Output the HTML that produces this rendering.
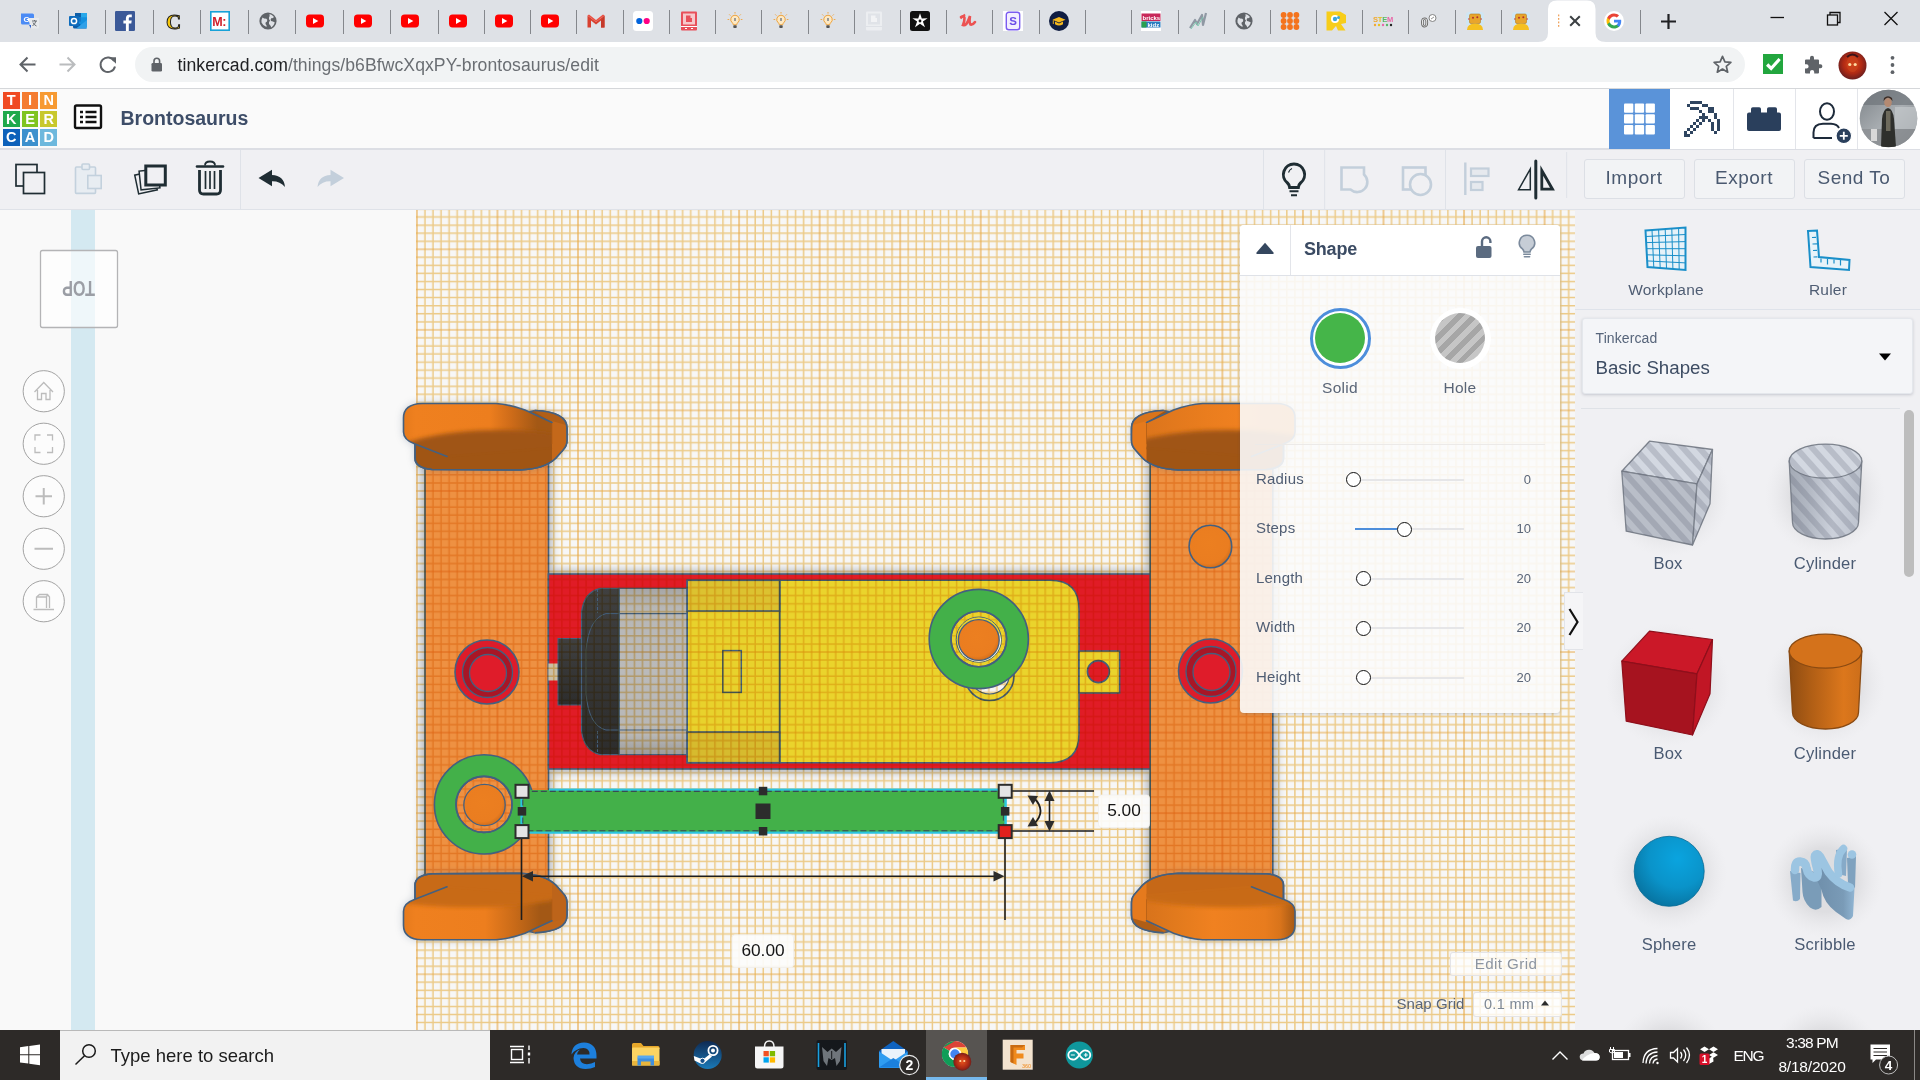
<!DOCTYPE html>
<html>
<head>
<meta charset="utf-8">
<title>Tinkercad</title>
<style>
*{box-sizing:border-box;margin:0;padding:0}
html,body{width:1920px;height:1080px;overflow:hidden;background:#f9f9f9;font-family:"Liberation Sans",sans-serif;}
.abs{position:absolute}
#root{position:absolute;left:0;top:0;width:1920px;height:1080px;overflow:hidden}
/* chrome */
#tabstrip{left:0;top:0;width:1920px;height:42px;background:#dee1e6}
#addrbar{left:0;top:42px;width:1920px;height:46px;background:#fff}
#addrline{left:0;top:88px;width:1920px;height:1px;background:#d5d7da}
#pill{left:135px;top:47px;width:1610px;height:35px;border-radius:18px;background:#f1f3f4}
.sep{position:absolute;top:10px;width:1px;height:24px;background:#84878c}
/* tinkercad header */
#tkhead{left:0;top:89px;width:1920px;height:60px;background:#fafafa}
#tkheadline{left:0;top:148px;width:1920px;height:2px;background:#dcdee4}
#tktool{left:0;top:150px;width:1920px;height:59px;background:#f0f0f3}
#tktoolline{left:0;top:209px;width:1920px;height:1px;background:#dfe2e8}
/* canvas */
#canvas{left:0;top:210px;width:1575px;height:820px;background:#f9f9f9;overflow:hidden}
#sidebar{left:1575px;top:210px;width:345px;height:820px;background:#f0f0f3;overflow:hidden}
#taskbar{left:0;top:1030px;width:1920px;height:50px;background:#2d2a28}
.t{position:absolute;white-space:nowrap;line-height:1}

.sl{left:1256px;font-size:15px;color:#4f5d73;letter-spacing:0.2px}
.sv{left:1481px;width:50px;text-align:right;font-size:13px;color:#5a6577}
.trk{left:1355px;width:109px;height:2px;background:#e6e6e8}
.knob{width:15px;height:15px;border-radius:50%;border:1.6px solid #111;background:#fff}

.sbl{width:100px;text-align:center;font-size:15.5px;color:#4f5d73;letter-spacing:0.2px}
.shl{width:100px;text-align:center;font-size:16.6px;color:#4a5a72;letter-spacing:0.2px}

.lg{position:absolute;width:16.6px;height:16.6px;color:#fff;font-weight:700;font-size:14.5px;line-height:16.6px;text-align:center}
.tb{top:159px;width:101px;height:39.5px;border:1px solid #dcdfe5;border-radius:3px;background:#f2f3f5;font-size:19px;line-height:35px;text-align:center;color:#4a5970;letter-spacing:0.5px}
</style>
</head>
<body>
<div id="root">
<!-- CHROME TAB STRIP -->
<div id="tabstrip" class="abs"></div>
<!-- ADDRESS BAR -->
<div id="addrbar" class="abs"></div>
<div id="pill" class="abs"></div>
<div id="addrline" class="abs"></div>
<!--TABS-->
<div class="sep" style="left:58.00px"></div>
<div class="sep" style="left:105.00px"></div>
<div class="sep" style="left:152.75px"></div>
<div class="sep" style="left:199.75px"></div>
<div class="sep" style="left:248.00px"></div>
<div class="sep" style="left:294.75px"></div>
<div class="sep" style="left:343.00px"></div>
<div class="sep" style="left:389.75px"></div>
<div class="sep" style="left:438.00px"></div>
<div class="sep" style="left:483.75px"></div>
<div class="sep" style="left:529.75px"></div>
<div class="sep" style="left:576.00px"></div>
<div class="sep" style="left:622.75px"></div>
<div class="sep" style="left:669.00px"></div>
<div class="sep" style="left:714.75px"></div>
<div class="sep" style="left:761.00px"></div>
<div class="sep" style="left:807.75px"></div>
<div class="sep" style="left:853.75px"></div>
<div class="sep" style="left:900.00px"></div>
<div class="sep" style="left:945.75px"></div>
<div class="sep" style="left:992.25px"></div>
<div class="sep" style="left:1038.75px"></div>
<div class="sep" style="left:1085.25px"></div>
<div class="sep" style="left:1130.75px"></div>
<div class="sep" style="left:1177.75px"></div>
<div class="sep" style="left:1223.75px"></div>
<div class="sep" style="left:1269.75px"></div>
<div class="sep" style="left:1315.75px"></div>
<div class="sep" style="left:1362.25px"></div>
<div class="sep" style="left:1408.25px"></div>
<div class="sep" style="left:1454.75px"></div>
<div class="sep" style="left:1500.75px"></div>
<div class="sep" style="left:1639.75px"></div>
<svg class="abs" style="left:19.5px;top:11.0px" width="20" height="20" viewBox="0 0 20 20"><path d="M1 2.5h11.5a1.5 1.5 0 0 1 1.5 1.5v9.5H2.5A1.5 1.5 0 0 1 1 12Z" fill="#4b8bf5"/><path d="M8 7h11v9a1.5 1.5 0 0 1-1.5 1.5H11Z" fill="#e8eaed"/><text x="3.4" y="11.3" font-family="Liberation Sans" font-size="8" font-weight="700" fill="#fff">G</text><path d="M12 10h5M14.5 9v1M16 10Q15 13 12.5 15M13 11.5Q14 14 16.5 15" stroke="#5f6368" stroke-width="0.9" fill="none"/><path d="M9 14l2 3.5v-3.5Z" fill="#3367d6"/></svg>
<svg class="abs" style="left:68.0px;top:11.0px" width="20" height="20" viewBox="0 0 20 20"><rect x="7" y="2" width="12" height="13" rx="1" fill="#1490df"/><rect x="7" y="2" width="6" height="4.3" fill="#0f5fa8"/><rect x="13" y="2" width="6" height="4.3" fill="#28a8ea"/><rect x="7" y="6.3" width="6" height="4.3" fill="#1478c8"/><path d="M5 9L19 17.5H6.5A1.5 1.5 0 0 1 5 16Z" fill="#0a5ba8"/><path d="M19 9V16A1.5 1.5 0 0 1 17.5 17.5H8Z" fill="#2fa0e8"/><rect x="1" y="5" width="10" height="10" rx="1" fill="#0f6cbd"/><circle cx="6" cy="10" r="2.6" fill="none" stroke="#fff" stroke-width="1.5"/></svg>
<svg class="abs" style="left:115.0px;top:11.0px" width="20" height="20" viewBox="0 0 20 20"><rect width="20" height="20" rx="1.2" fill="#3b5998"/><path d="M13.8 20v-7.6h2.5l.4-3h-2.9V7.6c0-.9.3-1.4 1.5-1.4h1.5V3.6c-.3 0-1.2-.1-2.2-.1-2.2 0-3.7 1.3-3.7 3.8v2.1H8.4v3h2.5V20Z" fill="#fff"/></svg>
<svg class="abs" style="left:163.0px;top:11.0px" width="20" height="20" viewBox="0 0 20 20"><text x="3" y="17.5" font-family="Liberation Serif" font-size="21" font-weight="700" fill="#f8c80a" stroke="#222" stroke-width="1">C</text></svg>
<svg class="abs" style="left:210.0px;top:11.0px" width="20" height="20" viewBox="0 0 20 20"><rect x="0.8" y="0.8" width="18.4" height="18.4" fill="#fff" stroke="#17a2d8" stroke-width="1.6"/><text x="2.3" y="15" font-family="Liberation Sans" font-size="12.5" font-weight="700" fill="#d0202a" letter-spacing="-0.5">M:</text></svg>
<svg class="abs" style="left:258.0px;top:11.0px" width="20" height="20" viewBox="0 0 20 20"><circle cx="10" cy="10" r="8.6" fill="#5f6368"/><path d="M4.5 6.5Q6 8 8 7.5Q10 8.5 9 10.5Q7 11 7.5 13Q9 14 8.5 16Q5 15 3.5 11.5Q3 9 4.5 6.5ZM11.5 3Q14 3.5 16 6Q15 7.5 13.5 7Q12 8.5 13 10Q15 10 16.8 11.5Q16 14.5 13.5 16.5Q12.5 14 11 13Q10.5 11 12 9.5Q10.5 8.5 11 6.5Q12 5 11.5 3Z" fill="#dee1e6"/></svg>
<svg class="abs" style="left:305.0px;top:11.0px" width="20" height="20" viewBox="0 0 20 20"><rect x="1" y="3.6" width="18" height="12.8" rx="3.6" fill="#f00"/><path d="M8 6.9L13.3 10L8 13.1Z" fill="#fff"/></svg>
<svg class="abs" style="left:353.0px;top:11.0px" width="20" height="20" viewBox="0 0 20 20"><rect x="1" y="3.6" width="18" height="12.8" rx="3.6" fill="#f00"/><path d="M8 6.9L13.3 10L8 13.1Z" fill="#fff"/></svg>
<svg class="abs" style="left:400.0px;top:11.0px" width="20" height="20" viewBox="0 0 20 20"><rect x="1" y="3.6" width="18" height="12.8" rx="3.6" fill="#f00"/><path d="M8 6.9L13.3 10L8 13.1Z" fill="#fff"/></svg>
<svg class="abs" style="left:448.0px;top:11.0px" width="20" height="20" viewBox="0 0 20 20"><rect x="1" y="3.6" width="18" height="12.8" rx="3.6" fill="#f00"/><path d="M8 6.9L13.3 10L8 13.1Z" fill="#fff"/></svg>
<svg class="abs" style="left:494.0px;top:11.0px" width="20" height="20" viewBox="0 0 20 20"><rect x="1" y="3.6" width="18" height="12.8" rx="3.6" fill="#f00"/><path d="M8 6.9L13.3 10L8 13.1Z" fill="#fff"/></svg>
<svg class="abs" style="left:540.0px;top:11.0px" width="20" height="20" viewBox="0 0 20 20"><rect x="1" y="3.6" width="18" height="12.8" rx="3.6" fill="#f00"/><path d="M8 6.9L13.3 10L8 13.1Z" fill="#fff"/></svg>
<svg class="abs" style="left:586.0px;top:11.0px" width="20" height="20" viewBox="0 0 20 20"><path d="M1.5 4.5L10 11L18.5 4.5V16.5H15V9.5L10 13.5L5 9.5V16.5H1.5Z" fill="#d8402f"/><path d="M1.5 4.5L10 11L18.5 4.5L17 3.5L10 9L3 3.5Z" fill="#ea5043"/><path d="M15 9.5V16.5H18.5V4.5Z" fill="#c5392a"/></svg>
<svg class="abs" style="left:633.0px;top:11.0px" width="20" height="20" viewBox="0 0 20 20"><rect width="20" height="20" rx="3.5" fill="#fff"/><circle cx="6.3" cy="10" r="3.1" fill="#0063dc"/><circle cx="13.7" cy="10" r="3.1" fill="#ff0084"/></svg>
<svg class="abs" style="left:679.0px;top:11.0px" width="20" height="20" viewBox="0 0 20 20"><rect x="2" y="0.5" width="16" height="19" rx="1" fill="#e8505b"/><rect x="4" y="2.5" width="12" height="11" fill="#f6c9cc"/><path d="M7 4.5h4.5v2.5h1.5v4H7Z" fill="#e8505b"/><rect x="2" y="15" width="16" height="1" fill="#fff"/><path d="M6 17.5h2M12 17.5h2" stroke="#fff" stroke-width="1"/></svg>
<svg class="abs" style="left:724.5px;top:11.0px" width="20" height="20" viewBox="0 0 20 20"><path d="M10 4.2a4.3 4.3 0 0 0-2.6 7.7c.6.6.8 1.1.9 1.9h3.4c.1-.8.3-1.3.9-1.9A4.3 4.3 0 0 0 10 4.2Z" fill="#fde9c4" stroke="#f0a33a" stroke-width="1"/><rect x="8.3" y="14.3" width="3.4" height="2.8" rx="0.8" fill="#555"/><path d="M10 1v1.6M4.2 3.4l1.2 1.2M15.8 3.4l-1.2 1.2M2.6 8.5h1.6M15.8 8.5h1.6" stroke="#f0a33a" stroke-width="0.9"/><rect x="9" y="7" width="2" height="3" fill="#999"/></svg>
<svg class="abs" style="left:770.8px;top:11.0px" width="20" height="20" viewBox="0 0 20 20"><path d="M10 4.2a4.3 4.3 0 0 0-2.6 7.7c.6.6.8 1.1.9 1.9h3.4c.1-.8.3-1.3.9-1.9A4.3 4.3 0 0 0 10 4.2Z" fill="#fde9c4" stroke="#f0a33a" stroke-width="1"/><rect x="8.3" y="14.3" width="3.4" height="2.8" rx="0.8" fill="#555"/><path d="M10 1v1.6M4.2 3.4l1.2 1.2M15.8 3.4l-1.2 1.2M2.6 8.5h1.6M15.8 8.5h1.6" stroke="#f0a33a" stroke-width="0.9"/><rect x="9" y="7" width="2" height="3" fill="#999"/></svg>
<svg class="abs" style="left:817.5px;top:11.0px" width="20" height="20" viewBox="0 0 20 20"><path d="M10 4.2a4.3 4.3 0 0 0-2.6 7.7c.6.6.8 1.1.9 1.9h3.4c.1-.8.3-1.3.9-1.9A4.3 4.3 0 0 0 10 4.2Z" fill="#fde9c4" stroke="#f0a33a" stroke-width="1"/><rect x="8.3" y="14.3" width="3.4" height="2.8" rx="0.8" fill="#555"/><path d="M10 1v1.6M4.2 3.4l1.2 1.2M15.8 3.4l-1.2 1.2M2.6 8.5h1.6M15.8 8.5h1.6" stroke="#f0a33a" stroke-width="0.9"/><rect x="9" y="7" width="2" height="3" fill="#999"/></svg>
<svg class="abs" style="left:864.0px;top:11.0px" width="20" height="20" viewBox="0 0 20 20"><rect x="2" y="0.5" width="16" height="19" rx="1" fill="#eceef1"/><rect x="4" y="2.5" width="12" height="11" fill="#e0e3e8"/><path d="M7 4.5h4.5v2.5h1.5v4H7Z" fill="#f2f3f5"/><rect x="2" y="15" width="16" height="1" fill="#dee1e6"/></svg>
<svg class="abs" style="left:910.0px;top:11.0px" width="20" height="20" viewBox="0 0 20 20"><rect width="20" height="20" rx="2.5" fill="#111"/><path d="M10 2.2L11.8 7.6L17.6 7.2L12.9 10.6L15 16.2L10 12.8L5 16.2L7.1 10.6L2.4 7.2L8.2 7.6Z" fill="#fff"/><circle cx="10" cy="10" r="1.4" fill="#111"/></svg>
<svg class="abs" style="left:957.5px;top:11.0px" width="20" height="20" viewBox="0 0 20 20"><path d="M3 6Q6 4 6.5 7Q6.5 11 5 14Q8 15 10 10L12 5Q11 12 12.5 13.5Q15 14 17 11" fill="none" stroke="#ec5252" stroke-width="2.6" stroke-linecap="round"/><path d="M2.5 7.5L7 3.5" stroke="#ec5252" stroke-width="2"/></svg>
<svg class="abs" style="left:1003.0px;top:11.0px" width="20" height="20" viewBox="0 0 20 20"><rect width="20" height="20" fill="#fff"/><rect x="3.3" y="1.3" width="13.4" height="17.4" rx="2.5" fill="#f3eefe" stroke="#7b5cf0" stroke-width="1.4"/><text x="6.2" y="14.2" font-family="Liberation Sans" font-size="11.5" font-weight="700" fill="#6a4be8">S</text></svg>
<svg class="abs" style="left:1049.0px;top:11.0px" width="20" height="20" viewBox="0 0 20 20"><circle cx="10" cy="10" r="10" fill="#101d42"/><path d="M3.5 8.8L10 6L16.5 8.8L10 11.6Z" fill="#f5b81c"/><path d="M6 10.6V13.2Q10 15.6 14 13.2V10.6L10 12.4Z" fill="#f5b81c"/><path d="M4.3 9.2V13" stroke="#f5b81c" stroke-width="0.9"/></svg>
<svg class="abs" style="left:1140.5px;top:11.0px" width="20" height="20" viewBox="0 0 20 20"><rect width="20" height="20" fill="#fff"/><rect x="0.5" y="2.5" width="19" height="7.5" fill="#c8285a"/><rect x="0.5" y="10.5" width="19" height="6" fill="#2a7cc0"/><rect x="0.5" y="10.5" width="5" height="6" fill="#2aa050"/><text x="1.5" y="8.8" font-family="Liberation Sans" font-size="6" font-weight="700" fill="#fff">bricks</text><text x="6.5" y="15.8" font-family="Liberation Sans" font-size="6" font-weight="700" fill="#fff">kidz</text></svg>
<svg class="abs" style="left:1188.0px;top:11.0px" width="20" height="20" viewBox="0 0 20 20"><path d="M2 17L7 9L9 13L14 4L15 14L18 2" fill="none" stroke="#8f98a3" stroke-width="2.2" stroke-linejoin="round"/><path d="M3 18L8 11L10 15L15 6" fill="none" stroke="#7fc9b0" stroke-width="1"/></svg>
<svg class="abs" style="left:1234.0px;top:11.0px" width="20" height="20" viewBox="0 0 20 20"><circle cx="10" cy="10" r="8.6" fill="#5f6368"/><path d="M4.5 6.5Q6 8 8 7.5Q10 8.5 9 10.5Q7 11 7.5 13Q9 14 8.5 16Q5 15 3.5 11.5Q3 9 4.5 6.5ZM11.5 3Q14 3.5 16 6Q15 7.5 13.5 7Q12 8.5 13 10Q15 10 16.8 11.5Q16 14.5 13.5 16.5Q12.5 14 11 13Q10.5 11 12 9.5Q10.5 8.5 11 6.5Q12 5 11.5 3Z" fill="#dee1e6"/></svg>
<svg class="abs" style="left:1280.0px;top:11.0px" width="20" height="20" viewBox="0 0 20 20"><g fill="#f4731c"><circle cx="3.6" cy="4" r="2.9"/><circle cx="10" cy="4" r="2.9"/><circle cx="16.4" cy="4" r="2.9"/><circle cx="3.6" cy="10" r="2.9"/><circle cx="10" cy="10" r="2.9"/><circle cx="16.4" cy="10" r="2.9"/><circle cx="3.6" cy="16" r="2.9"/><circle cx="10" cy="16" r="2.9"/><circle cx="16.4" cy="16" r="2.9"/></g></svg>
<svg class="abs" style="left:1326.0px;top:11.0px" width="20" height="20" viewBox="0 0 20 20"><path d="M0.5 0.5H14L20 4V12L15 13L19.5 19.5H12L10 15L6 19.5H0.5Z" fill="#f7cd1a"/><circle cx="9" cy="8" r="4" fill="#fff"/><circle cx="9" cy="8" r="2.2" fill="#3aa6dc"/><circle cx="12.5" cy="6.5" r="1.5" fill="#3aa6dc"/></svg>
<svg class="abs" style="left:1372.5px;top:11.0px" width="20" height="20" viewBox="0 0 20 20"><text x="0" y="10.5" font-family="Liberation Sans" font-size="7.5" font-weight="700" letter-spacing="-0.2"><tspan fill="#f0a830">S</tspan><tspan fill="#e8c020">T</tspan><tspan fill="#58b868">E</tspan><tspan fill="#e868a8">M</tspan><tspan fill="#48a8d8">A</tspan></text><g><circle cx="2" cy="14" r="1.2" fill="#f0a830"/><circle cx="6" cy="14" r="1.2" fill="#e8c020"/><circle cx="10" cy="14" r="1.2" fill="#e868a8"/><circle cx="14" cy="14" r="1.2" fill="#58b868"/><circle cx="18" cy="14" r="1.2" fill="#222"/></g></svg>
<svg class="abs" style="left:1419.0px;top:11.0px" width="20" height="20" viewBox="0 0 20 20"><text x="2" y="15.5" font-family="Liberation Sans" font-size="13" font-weight="700" fill="#fff" stroke="#666" stroke-width="0.9">0</text><circle cx="13.5" cy="7" r="3.5" fill="#fff" stroke="#777" stroke-width="0.9"/><path d="M12 8l3-2" stroke="#777" stroke-width="0.8"/></svg>
<svg class="abs" style="left:1465.0px;top:11.0px" width="20" height="20" viewBox="0 0 20 20"><rect x="1" y="1" width="18" height="14" rx="3" fill="#cfe6f4"/><rect x="4.5" y="3" width="11" height="9.5" rx="1.5" fill="#e8a52c" stroke="#b47a1e" stroke-width="0.6"/><circle cx="8" cy="6.8" r="1" fill="#b03030"/><circle cx="12.3" cy="6.3" r="1" fill="#b03030"/><path d="M3 8h1.5M15.5 8h1.5" stroke="#c33" stroke-width="1.2"/><path d="M2 19Q2 12.5 10 12.5Q18 12.5 18 19Z" fill="#f5c020"/></svg>
<svg class="abs" style="left:1511.0px;top:11.0px" width="20" height="20" viewBox="0 0 20 20"><rect x="1" y="1" width="18" height="14" rx="3" fill="#cfe6f4"/><rect x="4.5" y="3" width="11" height="9.5" rx="1.5" fill="#e8a52c" stroke="#b47a1e" stroke-width="0.6"/><circle cx="8" cy="6.8" r="1" fill="#b03030"/><circle cx="12.3" cy="6.3" r="1" fill="#b03030"/><path d="M3 8h1.5M15.5 8h1.5" stroke="#c33" stroke-width="1.2"/><path d="M2 19Q2 12.5 10 12.5Q18 12.5 18 19Z" fill="#f5c020"/></svg>
<svg class="abs" style="left:1604.0px;top:11.0px" width="20" height="20" viewBox="0 0 20 20"><circle cx="10" cy="10" r="10" fill="#fff"/><path d="M17.2 10.2c0-.6 0-1-.1-1.5H10v2.8h4.1c-.2 1-.8 1.8-1.6 2.4v2h2.5c1.4-1.3 2.2-3.3 2.2-5.7Z" fill="#4285f4"/><path d="M10 17.5c2 0 3.7-.7 5-1.8l-2.5-2c-.7.5-1.5.7-2.5.7-1.9 0-3.6-1.3-4.2-3.1H3.2v2C4.4 15.8 7 17.5 10 17.5Z" fill="#34a853"/><path d="M5.8 11.3c-.1-.4-.2-.9-.2-1.3s.1-.9.2-1.3v-2H3.2C2.7 7.7 2.5 8.8 2.5 10s.3 2.3.7 3.3Z" fill="#fbbc05"/><path d="M10 5.5c1.1 0 2.1.4 2.8 1.1l2.2-2.2C13.7 3.2 12 2.5 10 2.5 7 2.5 4.4 4.2 3.2 6.7l2.6 2C6.4 6.8 8.1 5.5 10 5.5Z" fill="#ea4335"/></svg>
<svg class="abs" style="left:1538px;top:0" width="68" height="42" viewBox="0 0 68 42"><path d="M0 42Q10 42 10 33V9Q10 0.5 19 0.5H49Q57.5 0.5 57.5 9V33Q57.5 42 68 42Z" fill="#fff"/><g fill="#f0a35e"><rect x="20" y="14.5" width="1.3" height="1.8"/><rect x="20" y="18" width="1.3" height="1.8"/><rect x="20" y="21.5" width="1.3" height="1.8"/><rect x="20" y="25" width="1.3" height="1.8"/></g><path d="M32.2 16.2L41.8 25.8M41.8 16.2L32.2 25.8" stroke="#3c4043" stroke-width="2"/></svg>
<svg class="abs" style="left:1660px;top:13px" width="17" height="17" viewBox="0 0 17 17"><path d="M8.5 1V16M1 8.5H16" stroke="#202124" stroke-width="2.2"/></svg>
<svg class="abs" style="left:1760px;top:5px" width="150" height="28" viewBox="1760 5 150 28"><path d="M1770.5 17.5H1784" stroke="#111" stroke-width="1.3"/><rect x="1827.5" y="15" width="10" height="10" fill="none" stroke="#111" stroke-width="1.3"/><path d="M1830 15V12.5H1840V22.5H1837.5" fill="none" stroke="#111" stroke-width="1.3"/><path d="M1884.5 12L1897.5 25M1897.5 12L1884.5 25" stroke="#111" stroke-width="1.3"/></svg>
<svg class="abs" style="left:0;top:42px" width="135" height="46" viewBox="0 42 135 46"><g fill="none" stroke="#5f6368" stroke-width="2" ><path d="M35.5 64.5H20.5M27.5 57.5L20.5 64.5L27.5 71.5"/></g><g fill="none" stroke="#babcbe" stroke-width="2"><path d="M59.5 64.5H74.5M67.5 57.5L74.5 64.5L67.5 71.5"/></g><g fill="none" stroke="#5f6368" stroke-width="2"><path d="M114.2 61A7.3 7.3 0 1 0 115 66.5"/></g><path d="M109.5 57.2H116V63.7Z" fill="#5f6368" transform="rotate(0)"/></svg>
<svg class="abs" style="left:150px;top:56px" width="14" height="18" viewBox="0 0 14 18"><rect x="1.5" y="7" width="10.5" height="8.5" rx="1.3" fill="#5f6368"/><path d="M4 7.5V5a2.8 2.8 0 0 1 5.6 0V7.5" fill="none" stroke="#5f6368" stroke-width="1.6"/></svg>
<div class="t" style="left:177.5px;top:56.5px;font-size:17.6px;letter-spacing:0.07px;color:#202124">tinkercad.com<span style="color:#6a6e73">/things/b6BfwcXqxPY-brontosaurus/edit</span></div>
<svg class="abs" style="left:1712px;top:54px" width="21" height="21" viewBox="0 0 21 21"><path d="M10.5 2.3L12.9 7.9L18.9 8.4L14.3 12.3L15.7 18.2L10.5 15L5.3 18.2L6.7 12.3L2.1 8.4L8.1 7.9Z" fill="none" stroke="#5f6368" stroke-width="1.7" stroke-linejoin="round"/></svg>
<div class="abs" style="left:1762.5px;top:54.3px;width:20.3px;height:20px;background:#22a63e"></div><svg class="abs" style="left:1762.5px;top:54.3px" width="20.3" height="20" viewBox="0 0 20 20"><path d="M4 10.5L8 14.5L16.5 5" fill="none" stroke="#fff" stroke-width="3.2"/></svg>
<svg class="abs" style="left:1802px;top:55px" width="21" height="21" viewBox="0 0 21 21"><path d="M8 2.8a2 2 0 0 1 4 0V4.5H16a1 1 0 0 1 1 1V9.2h1.4a2 2 0 0 1 0 4H17V17.5a1 1 0 0 1-1 1H12.2V17a2.1 2.1 0 0 0-4.2 0v1.5H4a1 1 0 0 1-1-1V13.5H4.5a2.1 2.1 0 0 0 0-4.2H3V5.5a1 1 0 0 1 1-1H8Z" fill="#5f6368"/></svg>
<svg class="abs" style="left:1838px;top:50.5px" width="29" height="29" viewBox="0 0 29 29"><defs><radialGradient id="cav" cx="0.5" cy="0.45" r="0.6"><stop offset="0" stop-color="#e04a18"/><stop offset="0.55" stop-color="#b02a14"/><stop offset="1" stop-color="#5a1c22"/></radialGradient></defs><circle cx="14.5" cy="14.5" r="14" fill="url(#cav)"/><ellipse cx="14.5" cy="13" rx="6" ry="8" fill="#c8401a" opacity="0.8"/><circle cx="11.8" cy="13.5" r="1.6" fill="#ffd9a0"/><circle cx="17.2" cy="13.5" r="1.6" fill="#ffd9a0"/><path d="M9 6Q14.5 1 20 6" stroke="#3a1418" stroke-width="2" fill="none"/></svg>
<svg class="abs" style="left:1889px;top:54px" width="7" height="22" viewBox="0 0 7 22"><g fill="#5f6368"><circle cx="3.5" cy="3.8" r="1.9"/><circle cx="3.5" cy="11" r="1.9"/><circle cx="3.5" cy="18.2" r="1.9"/></g></svg>
<!--/TABS-->
<!-- TINKERCAD HEADER -->
<div id="tkhead" class="abs"></div>
<div id="tkheadline" class="abs"></div>
<div id="tktool" class="abs"></div>
<div id="tktoolline" class="abs"></div>
<!--HEADER-->
<!-- logo -->
<div id="logo">
<div class="lg" style="left:3px;top:92px;background:#f04a22">T</div><div class="lg" style="left:21.7px;top:92px;background:#f47b30">I</div><div class="lg" style="left:40.4px;top:92px;background:#f79a32">N</div>
<div class="lg" style="left:3px;top:110.7px;background:#1fa94b">K</div><div class="lg" style="left:21.7px;top:110.7px;background:#7fc41f">E</div><div class="lg" style="left:40.4px;top:110.7px;background:#c8c82c">R</div>
<div class="lg" style="left:3px;top:129.4px;background:#0d61ba">C</div><div class="lg" style="left:21.7px;top:129.4px;background:#3d90cd">A</div><div class="lg" style="left:40.4px;top:129.4px;background:#6db8dd">D</div>
</div>
<!-- list icon -->
<svg class="abs" style="left:72px;top:102px" width="32" height="30" viewBox="0 0 32 30"><rect x="3" y="3.5" width="26" height="22.5" rx="1.5" fill="#fff" stroke="#111" stroke-width="2.4"/><path d="M8 10h3M8 15h3M8 20h3" stroke="#111" stroke-width="2.6"/><path d="M13.5 10h11M13.5 15h11M13.5 20h11" stroke="#111" stroke-width="2.6"/></svg>
<div class="t" style="left:120.5px;top:109px;font-size:19.5px;font-weight:700;color:#3d4d68;letter-spacing:0px">Brontosaurus</div>
<!-- right header icons -->
<div class="abs" style="left:1609px;top:89px;width:61px;height:60px;background:#5a93d9"></div>
<svg class="abs" style="left:1624px;top:103px" width="32" height="32" viewBox="0 0 32 32"><g fill="#fff"><rect x="0" y="0.5" width="9.3" height="9.3" rx="1"/><rect x="10.8" y="0.5" width="9.3" height="9.3" rx="1"/><rect x="21.6" y="0.5" width="9.3" height="9.3" rx="1"/><rect x="0" y="11.3" width="9.3" height="9.3" rx="1"/><rect x="10.8" y="11.3" width="9.3" height="9.3" rx="1"/><rect x="21.6" y="11.3" width="9.3" height="9.3" rx="1"/><rect x="0" y="22.1" width="9.3" height="9.3" rx="1"/><rect x="10.8" y="22.1" width="9.3" height="9.3" rx="1"/><rect x="21.6" y="22.1" width="9.3" height="9.3" rx="1"/></g></svg>
<div class="abs" style="left:1670px;top:89px;width:63.5px;height:60px;background:#fff;border-right:1px solid #e3e5ea"></div>
<div class="abs" style="left:1733.5px;top:89px;width:62px;height:60px;background:#fff;border-right:1px solid #e3e5ea"></div>
<div class="abs" style="left:1795.5px;top:89px;width:62.5px;height:60px;background:#fff;border-right:1px solid #e3e5ea"></div>
<div class="abs" style="left:1858px;top:89px;width:62px;height:60px;background:#fff"></div>
<!-- pickaxe -->
<svg class="abs" style="left:1683.7px;top:100.7px" width="37" height="37" viewBox="0 0 37 37" shape-rendering="crispEdges"><g fill="#2f4560"><rect x="6.08" y="0.00" width="3.04" height="3.04"/><rect x="9.12" y="0.00" width="3.04" height="3.04"/><rect x="12.16" y="0.00" width="3.04" height="3.04"/><rect x="15.20" y="0.00" width="3.04" height="3.04"/><rect x="3.04" y="3.04" width="3.04" height="3.04"/><rect x="18.24" y="3.04" width="3.04" height="3.04"/><rect x="21.28" y="3.04" width="3.04" height="3.04"/><rect x="6.08" y="6.08" width="3.04" height="3.04"/><rect x="9.12" y="6.08" width="3.04" height="3.04"/><rect x="12.16" y="6.08" width="3.04" height="3.04"/><rect x="24.32" y="6.08" width="3.04" height="3.04"/><rect x="27.36" y="6.08" width="3.04" height="3.04"/><rect x="15.20" y="9.12" width="3.04" height="3.04"/><rect x="24.32" y="9.12" width="3.04" height="3.04"/><rect x="27.36" y="9.12" width="3.04" height="3.04"/><rect x="18.24" y="12.16" width="3.04" height="3.04"/><rect x="30.40" y="12.16" width="3.04" height="3.04"/><rect x="15.20" y="15.20" width="3.04" height="3.04"/><rect x="18.24" y="15.20" width="3.04" height="3.04"/><rect x="21.28" y="15.20" width="3.04" height="3.04"/><rect x="30.40" y="15.20" width="3.04" height="3.04"/><rect x="12.16" y="18.24" width="3.04" height="3.04"/><rect x="18.24" y="18.24" width="3.04" height="3.04"/><rect x="24.32" y="18.24" width="3.04" height="3.04"/><rect x="33.44" y="18.24" width="3.04" height="3.04"/><rect x="9.12" y="21.28" width="3.04" height="3.04"/><rect x="15.20" y="21.28" width="3.04" height="3.04"/><rect x="27.36" y="21.28" width="3.04" height="3.04"/><rect x="33.44" y="21.28" width="3.04" height="3.04"/><rect x="6.08" y="24.32" width="3.04" height="3.04"/><rect x="12.16" y="24.32" width="3.04" height="3.04"/><rect x="27.36" y="24.32" width="3.04" height="3.04"/><rect x="33.44" y="24.32" width="3.04" height="3.04"/><rect x="3.04" y="27.36" width="3.04" height="3.04"/><rect x="9.12" y="27.36" width="3.04" height="3.04"/><rect x="27.36" y="27.36" width="3.04" height="3.04"/><rect x="33.44" y="27.36" width="3.04" height="3.04"/><rect x="0.00" y="30.40" width="3.04" height="3.04"/><rect x="6.08" y="30.40" width="3.04" height="3.04"/><rect x="30.40" y="30.40" width="3.04" height="3.04"/><rect x="0.00" y="33.44" width="3.04" height="3.04"/><rect x="3.04" y="33.44" width="3.04" height="3.04"/></g></svg>
<!-- brick -->
<svg class="abs" style="left:1745px;top:104px" width="38" height="30" viewBox="0 0 38 30"><path d="M2 10.5a2 2 0 0 1 2-2h2V5a1.8 1.8 0 0 1 1.8-1.8h6.4A1.8 1.8 0 0 1 16 5v3.5h6V5a1.8 1.8 0 0 1 1.8-1.8h6.4A1.8 1.8 0 0 1 32 5v3.5h2a2 2 0 0 1 2 2V25a2 2 0 0 1-2 2H4a2 2 0 0 1-2-2Z" fill="#2a3f5c"/></svg>
<!-- person plus -->
<svg class="abs" style="left:1809px;top:99px" width="44" height="46" viewBox="0 0 44 46"><g fill="none" stroke="#1d2a3a" stroke-width="2"><ellipse cx="18" cy="12.5" rx="7" ry="8.3"/><path d="M4.5 39V33.5Q4.5 25 14 24.8H22Q28 25 30 29"/><path d="M4.5 39H23"/></g><circle cx="34.8" cy="36.8" r="7.8" fill="#2a3f5c" stroke="#fff" stroke-width="1.2"/><path d="M30.8 36.8h8M34.8 32.8v8" stroke="#fff" stroke-width="1.8"/></svg>
<!-- avatar -->
<svg class="abs" style="left:1859px;top:89px" width="60" height="60" viewBox="0 0 60 60"><defs><clipPath id="av"><circle cx="29.5" cy="29.5" r="28.8"/></clipPath><linearGradient id="avg" x1="0" x2="1" y1="0" y2="1"><stop offset="0" stop-color="#7d8388"/><stop offset="0.5" stop-color="#a9aeb2"/><stop offset="1" stop-color="#6c7176"/></linearGradient></defs><g clip-path="url(#av)"><rect width="60" height="60" fill="url(#avg)"/><rect x="0" y="0" width="60" height="16" fill="#6f757a" opacity="0.7"/><rect x="36" y="18" width="24" height="22" fill="#c5c9cc" opacity="0.7"/><rect x="0" y="40" width="60" height="20" fill="#8b8f92" opacity="0.8"/><path d="M22 58L23 30Q24 20 29 19Q34 20 35 30L37 58Z" fill="#2e2f2c"/><ellipse cx="29" cy="13.5" rx="3.8" ry="4.6" fill="#b48a72"/><path d="M24.5 12Q29 5 33.5 12L33 9Q29 5.5 25 9Z" fill="#3a2a22"/><rect x="27" y="22" width="4.5" height="20" fill="#6d6a5c"/><rect x="12" y="40" width="6" height="12" fill="#d8d8d8"/></g></svg>
<!-- toolbar left icons -->
<svg class="abs" style="left:0;top:150px" width="360" height="59" viewBox="0 150 360 59">
<g fill="#f0f0f3" stroke="#1f2d33" stroke-width="1.7"><rect x="16" y="164.5" width="21" height="21.5"/><rect x="23.5" y="172.5" width="21" height="21"/></g>
<g fill="#e8edf2" stroke="#c3d1dd" stroke-width="1.6"><rect x="75.5" y="167" width="20" height="26.4" rx="1"/><rect x="82" y="164" width="7.5" height="5.5" rx="1"/><rect x="87.8" y="175.5" width="13.4" height="13"/></g>
<g fill="#f0f0f3" stroke="#1f2d33"><rect x="136.5" y="173" width="19" height="19" stroke-width="1.5" transform="rotate(-12 146 182.5)"/><rect x="140" y="170" width="19" height="19" stroke-width="1.5" transform="rotate(-6 149.5 179.5)"/><rect x="145.8" y="166" width="19.5" height="19" stroke-width="3"/></g>
<g fill="none" stroke="#1f2d33"><path d="M197 166.5H223" stroke-width="2.6" stroke-linecap="round"/><path d="M205 165.5Q205 161.5 210 161.5Q215 161.5 215 165.5" stroke-width="1.8"/><path d="M199.5 170V190Q199.5 194 203.5 194H216.5Q220.5 194 220.5 190V170" stroke-width="2.8"/><path d="M205.5 171V189M210 171V189M214.5 171V189" stroke-width="1.7"/></g>
<path d="M240.5 150V209" stroke="#dfe2e8" stroke-width="1"/>
<path d="M258.5 178L272 169.8V175Q284 175.5 285 187Q280 181 272 181.2V186.2Z" fill="#1f2d33"/>
<path d="M344 178L330.5 169.8V175Q318.5 175.5 317.5 187Q322.5 181 330.5 181.2V186.2Z" fill="#c3cfdb"/>
</svg>
<!-- toolbar right icons -->
<svg class="abs" style="left:1260px;top:150px" width="320" height="59" viewBox="1260 150 320 59">
<path d="M1263.5 150V209M1324.7 150V209M1445.5 150V209M1566.7 152V198" stroke="#dfe2e8" stroke-width="1"/>
<g fill="none" stroke="#1f2d33"><path d="M1294 164a10.6 10.6 0 0 0-6.5 19c1.6 1.4 2 2.6 2.2 4.6h8.6c.2-2 .6-3.2 2.2-4.6a10.6 10.6 0 0 0-6.5-19Z" stroke-width="3"/><path d="M1289.5 191.2h9M1291 195.2h6" stroke-width="2"/><path d="M1288.5 172.5Q1289.5 169.5 1292 168.5" stroke-width="1.2"/></g>
<g fill="none" stroke="#c3cfdb" stroke-width="2.6"><path d="M1341.5 167.5H1364V174.5A10 10 0 1 1 1350.5 189.5H1341.5Z"/><rect x="1403" y="167.5" width="22.5" height="22"/><circle cx="1420.5" cy="184.5" r="10.5" fill="#f0f0f3"/></g>
<g fill="#e6e9ee" stroke="#c3cfdb" stroke-width="2.2"><path d="M1465.3 162.5V195" stroke-width="2.4"/><rect x="1471" y="168.5" width="17.5" height="7.5"/><rect x="1471" y="182" width="11.5" height="8"/></g>
<g fill="none" stroke="#1f2d33"><path d="M1535.8 161V198" stroke-width="3" stroke-linecap="round"/><path d="M1518.5 189.8L1530.3 169V189.8Z" stroke-width="1.5"/><path d="M1541.8 170.5L1552.5 189.2H1541.8Z" stroke-width="2.8"/></g>
</svg>
<div class="abs tb" style="left:1583.5px">Import</div>
<div class="abs tb" style="left:1693.5px">Export</div>
<div class="abs tb" style="left:1803.5px">Send To</div>
<!--/HEADER-->
<!-- CANVAS -->
<div id="canvas" class="abs">
<!--SCENE-->
<svg class="abs" style="left:0;top:0" width="1575" height="820" viewBox="0 210 1575 820">
<defs>
  <pattern id="grid" patternUnits="userSpaceOnUse" x="416.9" y="168.75" width="80.55" height="80.55">
    <g stroke="#f4d18c" stroke-width="1.5">
      <path d="M8.055 0V80.55M16.11 0V80.55M24.165 0V80.55M32.22 0V80.55M40.275 0V80.55M48.33 0V80.55M56.385 0V80.55M64.44 0V80.55M72.495 0V80.55"/>
      <path d="M0 8.055H80.55M0 16.11H80.55M0 24.165H80.55M0 32.22H80.55M0 40.275H80.55M0 48.33H80.55M0 56.385H80.55M0 64.44H80.55M0 72.495H80.55"/>
    </g>
    <g stroke="#f0b04c" stroke-width="1.15">
      <path d="M0 0V80.55M80.55 0V80.55M0 0H80.55M0 80.55H80.55"/>
    </g>
  </pattern>
  <linearGradient id="gA" x1="0" x2="1" y1="0" y2="0">
    <stop offset="0" stop-color="#e67a1c"/><stop offset="0.08" stop-color="#ef801f"/><stop offset="0.58" stop-color="#ed7e1e"/><stop offset="0.72" stop-color="#cf6c19"/><stop offset="0.9" stop-color="#a35815"/>
  </linearGradient>
  <linearGradient id="gAd" x1="0" x2="0" y1="0" y2="1">
    <stop offset="0" stop-color="#a05514" stop-opacity="0"/><stop offset="0.35" stop-color="#a05514" stop-opacity="0"/><stop offset="0.62" stop-color="#a05514" stop-opacity="1"/>
  </linearGradient>
  <radialGradient id="pin" cx="0.45" cy="0.42" r="0.6"><stop offset="0" stop-color="#ec7f20"/><stop offset="0.8" stop-color="#ea7d20"/><stop offset="1" stop-color="#cf6c19"/></radialGradient><filter id="blur2"><feGaussianBlur stdDeviation="2"/></filter>
  <filter id="blur05"><feGaussianBlur stdDeviation="0.5"/></filter><filter id="blur1"><feGaussianBlur stdDeviation="1"/></filter>
  <filter id="blur4"><feGaussianBlur stdDeviation="4"/></filter>
  <clipPath id="clipA"><path d="M403.5 418Q403.5 404 422 403.5L496 403.5Q510 404.5 525 410L552 422.5L552 448L447 456.5L415 444Q403.5 440 403.5 432Z"/></clipPath>
  <path id="fSh" d="M403.5 418Q403.5 404 422 403.5L496 403.5Q510 404.5 525 410L535 410.5Q567 412 567 428L567 440Q567 446 563 450L556 458Q545 469 520 470L432 469.5Q415 468 415 458L415 444Q403.5 440 403.5 432Z"/>
  <path id="fB" d="M415 436L415 458Q415 468 432 469.5L520 470Q545 469 556 458L563 450Q567 446 567 440L567 428Q567 412 535 410.5Z"/>
  <path id="fS" d="M552 421L566 425L567 440Q567 446 563 450L552 461Z"/>
  <path id="fA" d="M403.5 418Q403.5 404 422 403.5L496 403.5Q510 404.5 525 410L552 422.5L552 448L447 456.5L415 444Q403.5 440 403.5 432Z"/>
  <path id="fAo" d="M447 456.5L415 444Q403.5 440 403.5 432L403.5 418Q403.5 404 422 403.5L496 403.5Q510 404.5 525 410L552 422.5"/>
  <path id="fBo" d="M535 410.5Q567 412 567 428L567 440Q567 446 563 450L556 458Q545 469 520 470L432 469.5Q415 468 415 458L415 444"/>
  <linearGradient id="gAb" x1="0" x2="1" y1="0" y2="0">
    <stop offset="0" stop-color="#e67a1c"/><stop offset="0.08" stop-color="#ef801f"/><stop offset="0.55" stop-color="#ed7e1e"/><stop offset="0.75" stop-color="#c86a18"/><stop offset="0.92" stop-color="#a35815"/>
  </linearGradient>
  <linearGradient id="gTR" x1="0" x2="1" y1="0" y2="0">
    <stop offset="0" stop-color="#e57a1d"/><stop offset="0.35" stop-color="#f08120"/><stop offset="0.6" stop-color="#ea7d1e"/><stop offset="1" stop-color="#dc751c"/>
  </linearGradient>
  <linearGradient id="gBR" x1="0" x2="1" y1="0" y2="0">
    <stop offset="0" stop-color="#a55915"/><stop offset="0.1" stop-color="#d9741b"/><stop offset="0.2" stop-color="#e87c1e"/><stop offset="0.55" stop-color="#f08120"/><stop offset="0.8" stop-color="#e27a1d"/><stop offset="1" stop-color="#d8731b"/>
  </linearGradient>
  <linearGradient id="gGray" x1="0" x2="0" y1="0" y2="1">
    <stop offset="0" stop-color="#a6a6a6"/><stop offset="0.12" stop-color="#b7b7b7"/><stop offset="0.5" stop-color="#bababa"/><stop offset="0.88" stop-color="#b7b7b7"/><stop offset="1" stop-color="#9c9c9c"/>
  </linearGradient>
  <linearGradient id="gBlk" x1="0" x2="0" y1="0" y2="1">
    <stop offset="0" stop-color="#404040"/><stop offset="0.5" stop-color="#363636"/><stop offset="1" stop-color="#2d2d2d"/>
  </linearGradient>
</defs>
<!-- light blue stripe -->
<rect x="71" y="210" width="24" height="820" fill="#d4e9f1"/>
<!-- workplane base -->
<rect x="416.3" y="210" width="1160" height="820" fill="#f7f7f7"/>
<!-- OBJECTS UNDER GRID -->
<g fill="#59606e" opacity="0.42" filter="url(#blur4)">
  <rect x="421" y="462" width="131" height="420"/>
  <rect x="1146" y="462" width="131" height="420"/>
  <rect x="546" y="570" width="606" height="203"/>
</g>
<g stroke="#44607f" stroke-width="1.6">
  <rect x="425" y="440" width="123.5" height="460" fill="#ee9142"/>
  <rect x="1150.2" y="440" width="122.6" height="460" fill="#ee9142"/>
  <rect x="548.4" y="574" width="601.8" height="195" fill="#e01c26"/>
  <!-- nub -->
  <rect x="548.4" y="663.5" width="10" height="17" fill="#cbbfa6" stroke="none"/>
  <!-- shaft block -->
  <rect x="558" y="638.5" width="24" height="66.5" fill="url(#gBlk)" stroke-width="1"/>
  <!-- black cap -->
  <path d="M619.3 588.3L600 588.3Q584 592 581.5 612L581.5 731Q584 751 600 754.6L619.3 754.6Z" fill="url(#gBlk)" stroke-width="1.2"/>
  <path d="M619.3 613.6L606 613.6Q589 618 586 650L586 694Q589 726 606 730L619.3 730" fill="none" stroke-width="1"/>
  <path d="M597.5 589L597.5 613M597.5 731L597.5 754" fill="none" stroke-width="1" stroke-dasharray="3 1.5"/>
  <!-- gray motor -->
  <rect x="619.3" y="588.3" width="68" height="166.3" fill="url(#gGray)" stroke-width="1.2"/>
  <path d="M619.3 613.6H687M619.3 730H687" fill="none" stroke-width="1.2"/>
  <!-- yellow body -->
  <path d="M779.6 580.3H1050Q1079 580.3 1079 609V734Q1079 762.7 1050 762.7H779.6Z" fill="#ead42c"/>
  <!-- tab -->
  <rect x="1079" y="651" width="40.6" height="42" fill="#ead42c"/>
  <circle cx="1098.4" cy="671.6" r="11" fill="#e01c26"/>
  <!-- gearbox -->
  <rect x="687.2" y="580.3" width="92.4" height="182.4" fill="#e8d22c"/>
  <rect x="687.2" y="580.3" width="92.4" height="30.7" fill="#dcc230"/>
  <rect x="687.2" y="732" width="92.4" height="30.7" fill="#d6bb2e"/>
  <rect x="722.8" y="650.6" width="18.5" height="41.8" fill="none" stroke-width="1.5"/>
  <!-- output shaft (lower circle) -->
  <circle cx="989.5" cy="676" r="24.5" fill="#ead42c"/>
  <circle cx="989.5" cy="674" r="20" fill="#f6f6f8" stroke-width="1.2"/>
  <circle cx="987" cy="668" r="20" fill="#ead42c" stroke="none"/>
</g>
<!-- GRID -->
<rect x="416" y="210" width="1160" height="820" fill="url(#grid)" style="mix-blend-mode:multiply"/>
<!-- OBJECTS ABOVE GRID -->
<g stroke="#44607f" stroke-width="1.6">
  <!-- red buttons -->
  <circle cx="487" cy="672" r="32" fill="#dd1c2a"/>
  <circle cx="487.5" cy="672.5" r="25" fill="#a81626" stroke-width="1.3"/>
  <circle cx="488" cy="673" r="18.5" fill="#df1c2a" stroke-width="1.3"/>
  <circle cx="1210.5" cy="671" r="32" fill="#dd1c2a"/>
  <circle cx="1211" cy="671.5" r="25" fill="#a81626" stroke-width="1.3"/>
  <circle cx="1211.5" cy="672" r="18.5" fill="#df1c2a" stroke-width="1.3"/>
  <!-- orange pin right -->
  <circle cx="1210.4" cy="546.5" r="21.3" fill="url(#pin)"/>
  <!-- green ring top -->
  <path fill-rule="evenodd" fill="#43b049" d="M929.2 639a49.6 49.6 0 1 0 99.2 0a49.6 49.6 0 1 0 -99.2 0ZM951 639a27.8 27.8 0 1 0 55.6 0a27.8 27.8 0 1 0 -55.6 0Z"/>
  <circle cx="978.8" cy="639" r="27.8" fill="none"/>
  <clipPath id="holeC"><circle cx="978.8" cy="639.6" r="22.2"/></clipPath>
  <circle cx="978.8" cy="639.6" r="22.6" fill="#ead42c" stroke-width="1"/>
  <g clip-path="url(#holeC)" stroke="none"><circle cx="979.6" cy="642.3" r="21.6" fill="#f6f6f8"/><circle cx="978" cy="637" r="21.2" fill="#ead42c"/></g>
  <circle cx="978.8" cy="640" r="20.4" fill="url(#pin)" stroke-width="1.3"/>
  <!-- green ring bottom-left -->
  <path fill-rule="evenodd" fill="#43b049" d="M434.4 804.4a49.6 49.6 0 1 0 99.2 0a49.6 49.6 0 1 0 -99.2 0ZM456 804.4a28 28 0 1 0 56 0a28 28 0 1 0 -56 0Z"/>
  <circle cx="484" cy="804.4" r="28" fill="none"/>
  <circle cx="484.5" cy="805" r="20.7" fill="url(#pin)" stroke-width="1.3"/>
</g>
<!-- feet -->
<g>
  <use href="#fSh" fill="#5a6a80" opacity="0.35" filter="url(#blur4)"/>
  <use href="#fB" fill="#a05514" stroke="#44607f" stroke-width="1.6"/>
  <path d="M533 410.5Q567 411 567 428L552 422.5Z" fill="#b25f17"/>
  <use href="#fS" fill="#c4681a"/>
  <use href="#fA" fill="url(#gA)"/>
  <g clip-path="url(#clipA)"><ellipse cx="500" cy="459" rx="112" ry="29" fill="#a05514" filter="url(#blur2)"/></g>
  <path d="M552 448L447 456.5" stroke="#a05514" stroke-width="2.5" fill="none"/>
  <use href="#fAo" fill="none" stroke="#44607f" stroke-width="1.6" stroke-linecap="round"/>
  <path d="M552 423.5L552 444" fill="none" stroke="#b05c16" stroke-width="1" opacity="0.7"/>
  <use href="#fBo" fill="none" stroke="#44607f" stroke-width="1.6"/>
</g>
<g transform="translate(1698.5,0) scale(-1,1)">
  <use href="#fSh" fill="#5a6a80" opacity="0.35" filter="url(#blur4)"/>
  <use href="#fB" fill="#a05514" stroke="#44607f" stroke-width="1.6"/>
  <path d="M533 410.5Q567 411 567 428L552 422.5Z" fill="#d9741b"/>
  <use href="#fS" fill="#e57a1d"/>
  <use href="#fA" fill="url(#gTR)"/>
  <g clip-path="url(#clipA)"><ellipse cx="470" cy="462" rx="120" ry="32" fill="#a05514" filter="url(#blur2)"/></g>
  <path d="M552 448L447 456.5" stroke="#a05514" stroke-width="2.5" fill="none"/>
  <use href="#fAo" fill="none" stroke="#44607f" stroke-width="1.6" stroke-linecap="round"/>
  <path d="M552 423.5L552 444" fill="none" stroke="#b05c16" stroke-width="1" opacity="0.7"/>
  <use href="#fBo" fill="none" stroke="#44607f" stroke-width="1.6"/>
</g>
<g transform="translate(0,1343.3) scale(1,-1)">
  <use href="#fSh" fill="#5a6a80" opacity="0.35" filter="url(#blur4)"/>
  <use href="#fB" fill="#c86a17" stroke="#44607f" stroke-width="1.6"/>
  <path d="M533 410.5Q567 411 567 428L552 422.5Z" fill="#c0661a"/>
  <use href="#fS" fill="#bd641a"/>
  <use href="#fA" fill="url(#gAb)"/>
  <g clip-path="url(#clipA)"><ellipse cx="470" cy="452" rx="100" ry="16" fill="#c86a17" filter="url(#blur2)"/></g>
  <path d="M552 448L447 456.5" stroke="#c86a17" stroke-width="2.5" fill="none"/>
  <use href="#fAo" fill="none" stroke="#44607f" stroke-width="1.6" stroke-linecap="round"/>
  <path d="M552 423.5L552 444" fill="none" stroke="#b05c16" stroke-width="1" opacity="0.7"/>
  <use href="#fBo" fill="none" stroke="#44607f" stroke-width="1.6"/>
</g>
<g transform="translate(1698.5,1343.3) scale(-1,-1)">
  <use href="#fSh" fill="#5a6a80" opacity="0.35" filter="url(#blur4)"/>
  <use href="#fB" fill="#c66817" stroke="#44607f" stroke-width="1.6"/>
  <path d="M533 410.5Q567 411 567 428L552 422.5Z" fill="#b05e16"/>
  <use href="#fS" fill="#e57a1d"/>
  <use href="#fA" fill="url(#gBR)"/>
  <g clip-path="url(#clipA)"><ellipse cx="470" cy="452" rx="100" ry="16" fill="#c86a17" filter="url(#blur2)"/></g>
  <path d="M552 448L447 456.5" stroke="#c86a17" stroke-width="2.5" fill="none"/>
  <use href="#fAo" fill="none" stroke="#44607f" stroke-width="1.6" stroke-linecap="round"/>
  <path d="M552 423.5L552 444" fill="none" stroke="#b05c16" stroke-width="1" opacity="0.7"/>
  <use href="#fBo" fill="none" stroke="#44607f" stroke-width="1.6"/>
</g>
<!-- selected green bar -->
<rect x="521" y="790" width="484" height="42" fill="#43b049"/>
<path d="M549 789.6H1005M527 832.6H1005M521.6 797V826M1005.6 797V826" stroke="#2bc4e0" stroke-width="2.4" fill="none"/>
<rect x="522.8" y="791.4" width="480.6" height="39.4" fill="none" stroke="#3a4a55" stroke-width="1.1" stroke-dasharray="6 3"/>
<!-- dimension lines -->
<g stroke="#1d1d1d" stroke-width="1.6" fill="none">
  <path d="M521.5 838V920M1005 838V920M526 876.3H1000"/>
  <path d="M1012 791H1094M1012 831H1094M1049.5 797V825"/>
  <path d="M1034 798Q1047 811 1034 824" stroke-width="1.8"/>
</g>
<g fill="#2c2c2c">
  <path d="M522 876.3L533 871V881.6Z"/><path d="M1004.5 876.3L993.5 871V881.6Z"/>
  <path d="M1049.5 790.5L1044.5 801H1054.5Z"/><path d="M1049.5 831.5L1044.5 821H1054.5Z"/>
  <path d="M1027.5 795.5L1038 796L1033 805Z"/><path d="M1027.5 826.5L1038 826L1033 817Z"/>
</g>
<!-- handles -->
<g stroke="#2c2c2c" stroke-width="2">
  <rect x="515.5" y="784.8" width="13" height="13" fill="#e4e4e4"/>
  <rect x="515.5" y="825.1" width="13" height="13" fill="#e4e4e4"/>
  <rect x="998.7" y="784.8" width="13" height="13" fill="#e4e4e4"/>
  <rect x="998.7" y="825.1" width="13" height="13" fill="#e0201c"/>
</g>
<g fill="#2c2c2c">
  <rect x="517.7" y="807" width="8.5" height="8.6"/>
  <rect x="1000.9" y="807" width="8.5" height="8.6"/>
  <rect x="758.8" y="786.8" width="8.5" height="8.5"/>
  <rect x="758.8" y="827" width="8.5" height="8.5"/>
  <rect x="755.5" y="803.5" width="15" height="15.5"/>
</g>
<!-- view cube & nav -->
<rect x="40.5" y="250.5" width="77" height="77" rx="2" fill="#fff" fill-opacity="0.62" stroke="#b4b4b6" stroke-width="1.3"/>
<g transform="translate(78.6,288.6) rotate(180) scale(0.72,1)" filter="url(#blur05)"><text x="0" y="8" text-anchor="middle" font-family="Liberation Sans" font-size="22.5" font-weight="700" fill="#9b9ea5">TOP</text></g>
<g fill="#fff" fill-opacity="0.55" stroke="#a3a3a3" stroke-width="1"><circle cx="43.75" cy="391.25" r="20.6"/><circle cx="43.75" cy="443.75" r="20.6"/><circle cx="43.75" cy="496.25" r="20.6"/><circle cx="43.75" cy="548.75" r="20.6"/><circle cx="43.75" cy="601.25" r="20.6"/></g>
<g fill="none" stroke="#bcbcbc" stroke-width="1.3">
<path d="M34.5 392L43.75 382.5L53 392M37.5 390V399.5H41.5V393.5H46V399.5H50V390"/>
<path d="M35 440.5V435H40.5M47 435H52.5V440.5M52.5 447V452.5H47M40.5 452.5H35V447"/>
<path d="M43.75 488V504.5M35.5 496.25H52" stroke-width="2"/>
<path d="M34.5 548.75H53" stroke-width="2"/>
<path d="M33.5 609.5H54M36.5 608V597L39.5 594.5H47.5L49.5 597V608M36.5 597H46.5V608M46.5 597L47.5 594.5"/>
</g>
<!-- dimension labels -->
<rect x="1098.5" y="795" width="51" height="32.5" rx="3" fill="#fcfcfb" fill-opacity="0.93" stroke="#f0efec" stroke-width="0.8"/>
<text x="1124" y="816" text-anchor="middle" font-family="Liberation Sans" font-size="17.3" fill="#151515">5.00</text>
<rect x="732" y="934.8" width="61.5" height="32.6" rx="3" fill="#fcfcfb" fill-opacity="0.93" stroke="#f0efec" stroke-width="0.8"/>
<text x="763" y="956" text-anchor="middle" font-family="Liberation Sans" font-size="17.3" fill="#151515">60.00</text>
</svg>
<!--/SCENE-->
</div>
<!--PANEL-->
<!-- SHAPE PANEL -->
<div class="abs" style="left:1240px;top:225px;width:320px;height:488px;border-radius:4px;background:rgba(251,251,251,0.9);box-shadow:0 1px 3px rgba(60,70,90,0.25)"></div>
<div class="abs" style="left:1240px;top:225px;width:320px;height:51px;border-radius:4px 4px 0 0;background:#fff;border-bottom:1px solid #dfe2e8"></div>
<div class="abs" style="left:1290px;top:225px;width:1px;height:50px;background:#e3e5ea"></div>
<svg class="abs" style="left:1254px;top:240px" width="22" height="16" viewBox="0 0 22 16"><path d="M2.5 12.5L11 2.8L19.5 12.5Q20 14 18.5 14H3.5Q2 14 2.5 12.5Z" fill="#35475f"/></svg>
<div class="t" style="left:1304px;top:240px;font-size:18px;font-weight:700;color:#3b4b63;letter-spacing:-0.2px">Shape</div>
<!-- lock -->
<svg class="abs" style="left:1474px;top:233px" width="20" height="28" viewBox="0 0 20 28"><rect x="2" y="13" width="15.5" height="12" rx="2" fill="#5b6b80"/><path d="M8 13V8.5a4.2 4.2 0 0 1 8.4 0V10" fill="none" stroke="#5b6b80" stroke-width="2.4"/></svg>
<!-- bulb -->
<svg class="abs" style="left:1515px;top:232px" width="24" height="30" viewBox="0 0 24 30"><path d="M12 3.2a7.6 7.6 0 0 0-4.6 13.7c1 .9 1.4 1.8 1.6 3.1h6c.2-1.3.6-2.2 1.6-3.1A7.6 7.6 0 0 0 12 3.2Z" fill="#c6cdd6" stroke="#7b8a9c" stroke-width="1.6"/><path d="M8.8 22.2h6.4M9.4 24.8h5.2" stroke="#7b8a9c" stroke-width="1.6" stroke-linecap="round"/></svg>
<!-- solid -->
<div class="abs" style="left:1309.5px;top:307.5px;width:61px;height:61px;border-radius:50%;border:3px solid #4d8edb;background:#fff"></div>
<div class="abs" style="left:1315px;top:313px;width:50px;height:50px;border-radius:50%;background:#45b549"></div>
<div class="t" style="left:1300px;width:80px;top:380px;text-align:center;font-size:15.5px;color:#5a6577;letter-spacing:0.3px">Solid</div>
<!-- hole -->
<div class="abs" style="left:1429.5px;top:307.5px;width:61px;height:61px;border-radius:50%;background:#fff"></div>
<div class="abs" style="left:1435px;top:313px;width:50px;height:50px;border-radius:50%;background:repeating-linear-gradient(135deg,#c6c6c6 0 5.5px,#a6a6a6 5.5px 11px)"></div>
<div class="t" style="left:1420px;width:80px;top:380px;text-align:center;font-size:15.5px;color:#5a6577;letter-spacing:0.3px">Hole</div>
<div class="abs" style="left:1255px;top:444px;width:290px;height:1px;background:#eceae8"></div>
<!-- sliders -->
<div id="sliders">
<div class="t sl" style="top:471px">Radius</div>
<div class="t sl" style="top:520px">Steps</div>
<div class="t sl" style="top:570px">Length</div>
<div class="t sl" style="top:619px">Width</div>
<div class="t sl" style="top:669px">Height</div>
<div class="abs trk" style="top:479px"></div><div class="abs trk" style="top:528px"></div><div class="abs trk" style="top:578px"></div><div class="abs trk" style="top:627px"></div><div class="abs trk" style="top:677px"></div>
<div class="abs" style="left:1355px;top:528px;width:42px;height:2px;background:#4d8edb"></div>
<div class="abs knob" style="left:1345.5px;top:472px"></div>
<div class="abs knob" style="left:1396.5px;top:521.5px"></div>
<div class="abs knob" style="left:1355.5px;top:571px"></div>
<div class="abs knob" style="left:1355.5px;top:620.5px"></div>
<div class="abs knob" style="left:1355.5px;top:670px"></div>
<div class="t sv" style="top:473px">0</div><div class="t sv" style="top:522px">10</div><div class="t sv" style="top:572px">20</div><div class="t sv" style="top:621px">20</div><div class="t sv" style="top:671px">20</div>
</div>
<!-- bottom-right grid buttons -->
<div class="abs" style="left:1450px;top:952px;width:112px;height:24px;border-radius:3px;background:rgba(255,255,255,0.75);border:1px solid rgba(225,225,228,0.9)"></div>
<div class="t" style="left:1450px;width:112px;text-align:center;top:956px;font-size:15.2px;color:#8d95a1;letter-spacing:0.4px">Edit Grid</div>
<div class="t" style="left:1396.5px;top:996px;font-size:15px;color:#5a6577;letter-spacing:0.05px">Snap Grid</div>
<div class="abs" style="left:1473px;top:992px;width:89px;height:25px;border-radius:3px;background:rgba(255,255,255,0.8);border:1px solid rgba(225,225,228,0.9)"></div>
<div class="t" style="left:1484px;top:997px;font-size:14.5px;color:#7d8794;letter-spacing:0.3px">0.1 mm</div>
<svg class="abs" style="left:1540px;top:999px" width="10" height="8" viewBox="0 0 10 8"><path d="M1 6.5L5 1.5L9 6.5Z" fill="#2b2b2b"/></svg>
<!--/PANEL-->
<!-- SIDEBAR -->
<div id="sidebar" class="abs">
<!--SIDEBAR-->
<svg class="abs" style="left:0;top:0" width="345" height="820" viewBox="1575 210 345 820">
<defs>
  <pattern id="hs" patternUnits="userSpaceOnUse" width="12" height="12" patternTransform="rotate(-42)"><rect width="12" height="12" fill="#000" opacity="0"/><rect width="6" height="12" fill="#4a5262" opacity="0.2"/></pattern>
  <radialGradient id="halo"><stop offset="0.55" stop-color="#dcdcdf" stop-opacity="0.9"/><stop offset="1" stop-color="#e8e8eb" stop-opacity="0"/></radialGradient>
  <linearGradient id="cylH" x1="0" x2="1"><stop offset="0" stop-color="#a4aab5"/><stop offset="0.25" stop-color="#b1b7c2"/><stop offset="0.6" stop-color="#ccd1db"/><stop offset="1" stop-color="#bcc2cd"/></linearGradient>
  <linearGradient id="cylO" x1="0" x2="1"><stop offset="0" stop-color="#8e4c12"/><stop offset="0.3" stop-color="#b05e15"/><stop offset="0.75" stop-color="#dc771c"/><stop offset="1" stop-color="#cc6e1a"/></linearGradient>
  <radialGradient id="sph" cx="0.62" cy="0.32" r="0.75"><stop offset="0" stop-color="#0aa4df"/><stop offset="0.55" stop-color="#0a93c9"/><stop offset="1" stop-color="#07709c"/></radialGradient>
  <g id="boxshape">
    <path d="M1649.5 441.2L1712.5 449.5L1697 483.8L1621.8 471.2Z" class="f1"/>
    <path d="M1621.8 471.2L1697 483.8L1692.5 545L1626.2 531.2Z" class="f2"/>
    <path d="M1697 483.8L1712.5 449.5L1710 503.8L1692.5 545Z" class="f3"/>
  </g>
</defs>
<!-- halos -->
<g>
<ellipse cx="1668" cy="495" rx="62" ry="62" fill="url(#halo)"/><ellipse cx="1825" cy="495" rx="60" ry="60" fill="url(#halo)"/>
<ellipse cx="1668" cy="685" rx="62" ry="62" fill="url(#halo)"/><ellipse cx="1825" cy="685" rx="60" ry="60" fill="url(#halo)"/>
<ellipse cx="1669" cy="873" rx="58" ry="58" fill="url(#halo)"/><ellipse cx="1825" cy="880" rx="58" ry="58" fill="url(#halo)"/>
<ellipse cx="1669" cy="1062" rx="58" ry="58" fill="url(#halo)"/><ellipse cx="1825" cy="1062" rx="58" ry="58" fill="url(#halo)"/>
</g>
<!-- workplane icon -->
<g fill="none" stroke="#1a8fc9">
  <path d="M1645.5 230.5L1685.5 227.5L1685.5 270L1647.5 267Z" stroke-width="2" fill="#e6f2f9"/>
  <path d="M1652 230L1653.8 267.5M1658.6 229.5L1660.2 268M1665.2 229L1666.5 268.5M1671.8 228.5L1672.9 269M1678.6 228L1679.2 269.5" stroke-width="1"/>
  <path d="M1645.8 236.5L1685.5 234.5M1646.1 242.6L1685.5 241.6M1646.4 248.7L1685.5 248.7M1646.7 254.8L1685.5 255.8M1647 260.9L1685.5 262.9" stroke-width="1"/>
</g>
<!-- ruler icon -->
<g fill="none" stroke="#1a8fc9" stroke-width="2">
  <path d="M1808 231L1817 230.5L1819 257L1849.5 260L1849 270L1810.5 267Z" fill="#e8f3f9"/>
  <path d="M1812 237.5L1816 237.3M1812.5 244L1817 243.8M1813 250.5L1817 250.3M1813.5 257L1817.5 256.8M1821 258.5L1821 262.5M1827.5 259L1827.5 264.5M1834 259.5L1834 263.5M1840.5 260L1840.5 265.5" stroke-width="1.2"/>
</g>
<!-- hole box -->
<g stroke="#7e848e" stroke-width="1.3" stroke-linejoin="round">
  <path d="M1649.5 441.2L1712.5 449.5L1697 483.8L1621.8 471.2Z" fill="#d3d8e1"/>
  <path d="M1621.8 471.2L1697 483.8L1692.5 545L1626.2 531.2Z" fill="#b9bec8"/>
  <path d="M1697 483.8L1712.5 449.5L1710 503.8L1692.5 545Z" fill="#c6cbd5"/>
  <path d="M1649.5 441.2L1712.5 449.5L1710 503.8L1692.5 545L1626.2 531.2L1621.8 471.2Z" fill="url(#hs)" stroke="none"/>
</g>
<!-- hole cylinder -->
<g stroke="#7e848e" stroke-width="1.3">
  <path d="M1789.2 461.2L1792.5 522.5A33 16.5 0 0 0 1858.5 522.5L1861.8 461.2Z" fill="url(#cylH)"/>
  <ellipse cx="1825.5" cy="461.2" rx="36.3" ry="17" fill="#d3d8e1"/>
  <path d="M1789.2 461.2A36.3 17 0 0 1 1861.8 461.2L1858.5 522.5A33 16.5 0 0 1 1792.5 522.5Z" fill="url(#hs)" stroke="none"/>
</g>
<!-- red box -->
<g stroke="#8f0f1b" stroke-width="1.2" stroke-linejoin="round" transform="translate(0,190)">
  <path d="M1649.5 441.2L1712.5 449.5L1697 483.8L1621.8 471.2Z" fill="#cb1828"/>
  <path d="M1621.8 471.2L1697 483.8L1692.5 545L1626.2 531.2Z" fill="#a6131f"/>
  <path d="M1697 483.8L1712.5 449.5L1710 503.8L1692.5 545Z" fill="#c11625"/>
</g>
<!-- orange cylinder -->
<g stroke="#8a4a12" stroke-width="1.3" transform="translate(0,190)">
  <path d="M1789.2 461.2L1792.5 522.5A33 16.5 0 0 0 1858.5 522.5L1861.8 461.2Z" fill="url(#cylO)"/>
  <ellipse cx="1825.5" cy="461.2" rx="36.3" ry="17" fill="#d4721b"/>
</g>
<!-- sphere -->
<circle cx="1669.2" cy="871.3" r="35" fill="url(#sph)" stroke="#066a94" stroke-width="0.8"/>
<!-- scribble -->
<g stroke-linejoin="round" stroke-linecap="round">
  <linearGradient id="scw" x1="0" x2="1"><stop offset="0" stop-color="#6f8fab"/><stop offset="0.7" stop-color="#7a9bb7"/><stop offset="1" stop-color="#90b5d3"/></linearGradient>
  <path d="M1847 858L1856 856L1855 888L1848 884Z" fill="#7fa2bf"/>
  <path d="M1836 850L1847 848L1846 876L1838 874Z" fill="#86aac8"/>
  <path d="M1790 871L1800.5 873L1800 899Q1797 902.5 1793 900.5Z" fill="#86abc9"/>
  <path d="M1801 868L1821.5 874L1821.5 907Q1816 912 1810 907.5Q1803 901 1802.5 892Z" fill="#7a9cb8"/>
  <path d="M1817 856L1829 872Q1840 884 1854.5 888L1853 916Q1850 921.5 1846 919L1836 912Q1824 903 1821.5 890L1817 880Z" fill="url(#scw)"/>
  <path d="M1795 870Q1794.5 861.5 1800 861.5Q1806 862 1806.5 868Q1808 876 1814 877.5Q1819 878 1817.5 870Q1814 858 1815 855.5Q1817 852.5 1820 856.5L1828.5 872Q1837 883.5 1850 887.5" fill="none" stroke="#9cc5e2" stroke-width="8.5"/>
  <path d="M1838.5 874Q1835.5 856 1843.5 848.5" fill="none" stroke="#9cc5e2" stroke-width="7.5"/>
  <circle cx="1852" cy="854.5" r="4.3" fill="#9cc5e2"/>
</g>
<!-- dividers -->
<path d="M1575 309.5H1920" stroke="#dfe3ea" stroke-width="1"/>
<path d="M1581 408.5H1900" stroke="#dfe2e7" stroke-width="1"/>
<!-- scrollbar -->
<rect x="1904" y="410" width="10" height="167" rx="5" fill="#bdbdbd"/>
</svg>
<div class="t sbl" style="left:41px;top:72px">Workplane</div>
<div class="t sbl" style="left:203px;top:72px">Ruler</div>
<div class="abs" style="left:7px;top:108px;width:331px;height:76px;border-radius:3px;background:#f4f5f8;border:1px solid #e4e7ec;box-shadow:0 1px 3px rgba(70,80,100,0.25)"></div>
<div class="t" style="left:20.5px;top:121px;font-size:14px;color:#56647a;letter-spacing:0.1px">Tinkercad</div>
<div class="t" style="left:20.5px;top:149px;font-size:18.7px;color:#3d4c63">Basic Shapes</div>
<svg class="abs" style="left:303px;top:142px" width="14" height="10" viewBox="0 0 14 10"><path d="M1 1.5H13L7 8.5Z" fill="#000"/></svg>
<div class="t shl" style="left:43px;top:346px">Box</div>
<div class="t shl" style="left:200px;top:346px">Cylinder</div>
<div class="t shl" style="left:43px;top:536px">Box</div>
<div class="t shl" style="left:200px;top:536px">Cylinder</div>
<div class="t shl" style="left:44px;top:727px">Sphere</div>
<div class="t shl" style="left:200px;top:727px">Scribble</div>
<!--/SIDEBAR-->
</div>
<!-- collapse tab -->
<div class="abs" style="left:1564px;top:592px;width:19px;height:58px;background:#f5f5f7;border:1px solid #e2e4e9;border-right:none"></div>
<svg class="abs" style="left:1566px;top:606px" width="16" height="32" viewBox="0 0 16 32"><path d="M3.5 3L11.5 16L3.5 29" fill="none" stroke="#111" stroke-width="2.2"/></svg>
<!-- TASKBAR -->
<div id="taskbar" class="abs">
<!--TASKBAR-->
<div class="abs" style="left:60px;top:0;width:430px;height:50px;background:#f2f2f2;border-top:1px solid #b9b9b9"></div>
<svg class="abs" style="left:0;top:0" width="1920" height="50" viewBox="0 1030 1920 50">
<!-- start -->
<g fill="#fff"><path d="M20 1047.2L28.3 1046V1054.3H20ZM29.3 1045.9L40 1044.4V1054.3H29.3ZM20 1055.3H28.3V1063.6L20 1062.4ZM29.3 1055.3H40V1065.2L29.3 1063.7Z"/></g>
<!-- search icon -->
<g fill="none" stroke="#1b1b1b" stroke-width="1.5"><circle cx="89" cy="1051" r="6.3"/><path d="M84.5 1055.7L75.5 1064.5"/></g>
<!-- active chrome bg -->
<rect x="926" y="1030" width="61" height="50" fill="#575451"/><rect x="926" y="1077" width="61" height="3" fill="#76b9ed"/>
<!-- task view -->
<g fill="none" stroke="#fff" stroke-width="1.4"><rect x="511.5" y="1049.5" width="11" height="10"/><path d="M510 1046.5H524M510 1062.5H524M529 1045.5V1050M529 1058V1063.5"/><rect x="527.8" y="1052.5" width="2.4" height="3" fill="#fff" stroke="none"/></g>
<!-- edge -->
<path d="M571.5 1054.5Q572 1043 584 1042.5Q596.5 1043 596.5 1056V1058.5H580Q580.5 1064 587 1064.2Q591.5 1064 595 1062V1067Q591 1069 585.5 1069Q574 1068.5 573.5 1058Q574 1051.5 580 1049.5Q577.5 1051.5 577 1054.5H589.5Q589.5 1048 583.5 1048Q575.5 1048.5 571.5 1054.5Z" fill="#1d7fdc"/>
<!-- folder -->
<g><path d="M632 1044.5Q632 1043 633.5 1043H641L643.5 1046H658Q659.5 1046 659.5 1047.5V1049H632Z" fill="#e6a72a"/><rect x="632" y="1047.5" width="27.5" height="18" rx="1" fill="#fcd462"/><rect x="632" y="1061" width="27.5" height="4.5" fill="#e9b53c"/><path d="M637.5 1057.5H654V1065.5H650.5V1061.5H641V1065.5H637.5Z" fill="#3f8fde"/><rect x="637.5" y="1055.5" width="16.5" height="3" fill="#5aa9ee"/></g>
<!-- steam -->
<g><defs><linearGradient id="stm" x1="0" x2="0" y1="0" y2="1"><stop offset="0" stop-color="#0f2a52"/><stop offset="1" stop-color="#1a7ab8"/></linearGradient></defs><circle cx="707.7" cy="1055" r="14" fill="url(#stm)"/><circle cx="713" cy="1050.5" r="4.6" fill="none" stroke="#fff" stroke-width="1.8"/><circle cx="713" cy="1050.5" r="2" fill="#fff"/><path d="M693.8 1056L703 1059.5L709.5 1054.5L712 1056.5L705.5 1062Q703 1065 699.5 1063L694.5 1060.5Z" fill="#fff"/><circle cx="702.5" cy="1060.8" r="2.6" fill="#16508a" stroke="#fff" stroke-width="1"/></g>
<!-- store -->
<g><path d="M764.5 1047Q764.5 1041 769.3 1041Q774 1041 774 1047" fill="none" stroke="#f3f3f3" stroke-width="1.5"/><path d="M755 1046.5H783.5V1066Q783.5 1068.5 781 1068.5H757.5Q755 1068.5 755 1066Z" fill="#f6f6f6"/><rect x="763.5" y="1051" width="5.3" height="5.3" fill="#f25022"/><rect x="769.8" y="1051" width="5.3" height="5.3" fill="#7fba00"/><rect x="763.5" y="1057.3" width="5.3" height="5.3" fill="#00a4ef"/><rect x="769.8" y="1057.3" width="5.3" height="5.3" fill="#ffb900"/></g>
<!-- predator -->
<g><rect x="816.5" y="1040" width="30.5" height="30" rx="2" fill="#15181c"/><path d="M818.5 1043V1067" stroke="#1aa0e0" stroke-width="1.6"/><path d="M845 1043V1067" stroke="#1aa0e0" stroke-width="1.6"/><path d="M822 1047L827.5 1052L831.7 1048.5L836 1052L841.5 1047L840 1061L836.5 1066L835 1058L831.7 1060L828.5 1058L827 1066L823.5 1061Z" fill="#6f757b"/><path d="M831.7 1051V1059" stroke="#15181c" stroke-width="1"/></g>
<!-- mail -->
<g><path d="M879 1051L893.3 1041L907.6 1051V1066.5Q907.6 1068 906 1068H880.5Q879 1068 879 1066.5Z" fill="#0f63c0"/><path d="M881.5 1049H905V1060H881.5Z" fill="#e9f2fb"/><path d="M879 1051.5L893.3 1061L907.6 1051.5V1066.5Q907.6 1068 906 1068H880.5Q879 1068 879 1066.5Z" fill="#2f9cf0"/><path d="M879 1067.5L893.3 1058L907.6 1067.5" fill="#1b80dd"/><circle cx="909.3" cy="1065" r="9.6" fill="#2d2a28" stroke="#e8e8e8" stroke-width="1.1"/><text x="909.3" y="1070" text-anchor="middle" font-family="Liberation Sans" font-size="14" font-weight="700" fill="#fff">2</text></g>
<!-- chrome -->
<g><circle cx="955" cy="1054" r="13" fill="#fff"/><path d="M955 1041A13 13 0 0 1 966.3 1047.5H955A6.5 6.5 0 0 0 949.4 1050.8L943.7 1047.5A13 13 0 0 1 955 1041Z" fill="#db4437"/><path d="M955 1041A13 13 0 0 0 943.7 1047.5L949.4 1057.2A6.5 6.5 0 0 1 949.4 1050.8L943.7 1047.5A13 13 0 0 0 953 1066.8L958 1060Q953 1061.5 949.4 1057.2L943.7 1047.5Z" fill="#0f9d58"/><path d="M943.7 1047.5A13 13 0 0 0 955 1067L960.6 1057.2A6.5 6.5 0 0 1 949.4 1057.2Z" fill="#0f9d58"/><path d="M966.3 1047.5A13 13 0 0 1 955 1067L960.6 1057.2A6.5 6.5 0 0 0 960.6 1050.8L955 1047.5Z" fill="#ffcd40"/><circle cx="955" cy="1054" r="5.3" fill="#4285f4" stroke="#fff" stroke-width="1.2"/><defs><radialGradient id="cav2" cx="0.5" cy="0.5" r="0.6"><stop offset="0" stop-color="#e8521c"/><stop offset="0.6" stop-color="#a82814"/><stop offset="1" stop-color="#4a1a20"/></radialGradient></defs><circle cx="962.3" cy="1061.7" r="9" fill="url(#cav2)"/><circle cx="960.3" cy="1061" r="1.1" fill="#ffd9a0"/><circle cx="964.3" cy="1061" r="1.1" fill="#ffd9a0"/></g>
<!-- fusion -->
<g><rect x="1002.7" y="1039.7" width="30" height="30" fill="#f3e3cf"/><path d="M1010.5 1045H1025V1050H1016.5V1053.5H1023.5V1058.5H1016.5V1065L1010.5 1062Z" fill="#f08a1c"/><path d="M1010.5 1045H1025L1022 1047.5H1013.5V1063.5L1010.5 1062Z" fill="#c96a10"/><text x="1026.5" y="1067.5" text-anchor="middle" font-family="Liberation Sans" font-size="5.5" fill="#f08a1c">360</text></g>
<!-- arduino -->
<g><circle cx="1079.3" cy="1055" r="13.6" fill="#0f979c"/><path d="M1079.3 1055Q1076 1050 1072.8 1050.5A4.5 4.5 0 0 0 1072.8 1059.5Q1076 1060 1079.3 1055Q1082.6 1050 1085.8 1050.5A4.5 4.5 0 0 1 1085.8 1059.5Q1082.6 1060 1079.3 1055Z" fill="none" stroke="#fff" stroke-width="1.8"/><path d="M1070.8 1055H1074.8M1083.8 1055H1087.8M1085.8 1053V1057" stroke="#fff" stroke-width="1.1"/></g>
<!-- tray -->
<g fill="none" stroke="#fff" stroke-width="1.4"><path d="M1552.5 1059.5L1560 1052L1567.5 1059.5"/></g>
<path d="M1584 1060.5Q1579.5 1060.5 1579.7 1056.5Q1580 1053.5 1583.5 1053.5Q1585 1049.5 1589.5 1049.8Q1593 1050 1594.5 1053Q1599.5 1053 1599.7 1057Q1599.5 1060.5 1596 1060.5Z" fill="#dcdcdc"/><path d="M1582 1060.5Q1586 1054 1594.5 1053Q1599.5 1053 1599.7 1057Q1599.5 1060.5 1596 1060.5Z" fill="#fff"/>
<g fill="none" stroke="#fff" stroke-width="1.3"><rect x="1612.5" y="1050.5" width="16" height="9"/><rect x="1629" y="1053" width="1.5" height="4" fill="#fff" stroke="none"/><rect x="1614" y="1052" width="9" height="6" fill="#fff" stroke="none"/><path d="M1610.5 1047V1049.5M1613.5 1047V1049.5M1609.5 1049.5H1614.5V1052Q1612 1054 1609.5 1052Z" stroke-width="1"/></g>
<g fill="none" stroke="#fff" stroke-width="1.3" transform="translate(4.5,0)"><path d="M1641.5 1063.5Q1642 1052.5 1653 1052M1645 1063.5Q1645.5 1056 1653 1055.5M1648.5 1063.5Q1649 1059.5 1653 1059M1638.5 1063Q1639 1049 1653 1048.5"/><circle cx="1653" cy="1063" r="1.2" fill="#fff" stroke="none"/></g>
<g fill="none" stroke="#fff" stroke-width="1.3"><path d="M1670.5 1052.5H1673.5L1677.5 1048.5V1062L1673.5 1058H1670.5Z"/><path d="M1680.5 1052Q1683 1055.2 1680.5 1058.5M1683.5 1049.5Q1688 1055.2 1683.5 1061M1686.5 1047.5Q1692.5 1055.2 1686.5 1063"/></g>
<g fill="#fff"><path d="M1704.5 1046.5L1709 1049.3L1704.5 1052L1700 1049.3ZM1713.5 1046.5L1718 1049.3L1713.5 1052L1709 1049.3ZM1713.5 1052.2L1718 1055L1713.5 1057.8L1709 1055ZM1709 1058.5L1713 1056L1713.5 1061.5L1709 1064Z"/></g><rect x="1699.5" y="1053.5" width="10" height="11.5" rx="1.5" fill="#d8102a"/><text x="1704.5" y="1063.3" text-anchor="middle" font-family="Liberation Sans" font-size="10" font-weight="700" fill="#fff">1</text>
<!-- notification -->
<g><path d="M1870.5 1044.5H1890V1059.5H1876L1872.5 1063V1059.5H1870.5Z" fill="#fff"/><path d="M1873.5 1048.5H1887M1873.5 1052H1887M1873.5 1055.5H1887" stroke="#2d2a28" stroke-width="1.1"/><circle cx="1888.6" cy="1065" r="9" fill="#2d2a28" stroke="#bdbdbd" stroke-width="1"/><text x="1888.6" y="1070" text-anchor="middle" font-family="Liberation Sans" font-size="13.5" font-weight="700" fill="#fff">4</text></g>
<path d="M1914.5 1030V1080" stroke="#8a8886" stroke-width="1"/>
</svg>
<div class="t" style="left:110.5px;top:17px;font-size:18.5px;color:#1c1c1c">Type here to search</div>
<div class="t" style="left:1733.5px;top:18px;font-size:15.5px;color:#fff;letter-spacing:-1.3px">ENG</div>
<div class="t" style="left:1771px;width:82px;text-align:center;top:5px;font-size:15.5px;color:#fff;letter-spacing:-0.85px">3:38 PM</div>
<div class="t" style="left:1771px;width:82px;text-align:center;top:29px;font-size:15.5px;color:#fff;letter-spacing:-0.2px">8/18/2020</div>
<!--/TASKBAR-->
</div>
</div>
</body>
</html>
